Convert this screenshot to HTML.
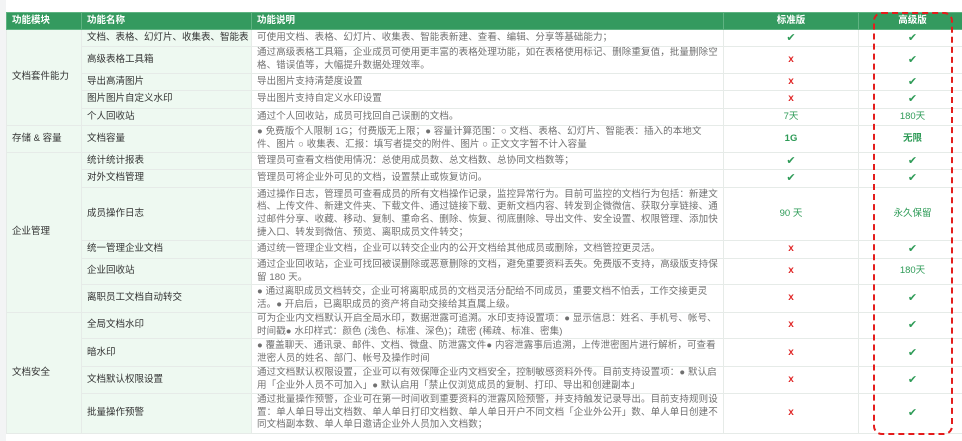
<!DOCTYPE html>
<html><head><meta charset="utf-8">
<style>
html,body{margin:0;padding:0;background:#fff;width:962px;height:441px;overflow:hidden;position:relative}
body{font-family:"Liberation Sans","Noto Sans CJK SC",sans-serif;}
.strip{position:absolute;left:0;top:0;width:6px;height:441px;background:#f3f4f5}
table{position:absolute;left:6px;top:12px;border-collapse:collapse;table-layout:fixed;width:960px;font-size:9.5px;line-height:12.6px}
td,th{border:1px solid #e6ebe8;padding:0 0 0 5px;white-space:nowrap;overflow:hidden;vertical-align:middle;box-sizing:border-box}
th{background:#349a5f;color:#fff;font-weight:bold;text-align:left;height:17px;border-color:#5fb382}
th.c,td.c{text-align:center;padding:0}
td.g{background:#eef9f1;color:#333}
td.n{background:#eef9f1;color:#333}
td.d{color:#707070;letter-spacing:0.1px}
.ok{color:#2e9b57;font-size:11px}
.no{color:#e02828;font-weight:bold;font-size:10px}
.gt{color:#2e9b57}
.gb{color:#2e9b57;font-weight:bold}
.box{position:absolute;left:873px;top:12px;width:76px;height:419px;border:2px dashed #e41c1c;border-radius:9px}
</style></head><body>
<div class="strip"></div>
<table>
<colgroup><col style="width:75px"><col style="width:170px"><col style="width:472px"><col style="width:135px"><col style="width:108px"></colgroup>
<tr><th>功能模块</th><th>功能名称</th><th>功能说明</th><th class="c">标准版</th><th class="c">高级版</th></tr>
<tr style="height:17px"><td class="g" rowspan="5">文档套件能力</td><td class="n">文档、表格、幻灯片、收集表、智能表</td><td class="d">可使用文档、表格、幻灯片、收集表、智能表新建、查看、编辑、分享等基础能力；</td><td class="c ok">✔</td><td class="c ok">✔</td></tr>
<tr style="height:27px"><td class="n">高级表格工具箱</td><td class="d">通过高级表格工具箱，企业成员可使用更丰富的表格处理功能，如在表格使用标记、删除重复值，批量删除空<br>格、错误值等，大幅提升数据处理效率。</td><td class="c no">x</td><td class="c ok">✔</td></tr>
<tr style="height:17px"><td class="n">导出高清图片</td><td class="d">导出图片支持清楚度设置</td><td class="c no">x</td><td class="c ok">✔</td></tr>
<tr style="height:18px"><td class="n">图片图片自定义水印</td><td class="d">导出图片支持自定义水印设置</td><td class="c no">x</td><td class="c ok">✔</td></tr>
<tr style="height:17px"><td class="n">个人回收站</td><td class="d">通过个人回收站，成员可找回自己误删的文档。</td><td class="c gt">7天</td><td class="c gt">180天</td></tr>
<tr style="height:27px"><td class="g">存储 &amp; 容量</td><td class="n">文档容量</td><td class="d">● 免费版个人限制 1G；付费版无上限；● 容量计算范围：○ 文档、表格、幻灯片、智能表：插入的本地文<br>件、图片 ○ 收集表、汇报：填写者提交的附件、图片 ○ 正文文字暂不计入容量</td><td class="c gb">1G</td><td class="c gb">无限</td></tr>
<tr style="height:17px"><td class="g" rowspan="6">企业管理</td><td class="n">统计统计报表</td><td class="d">管理员可查看文档使用情况：总使用成员数、总文档数、总协同文档数等；</td><td class="c ok">✔</td><td class="c ok">✔</td></tr>
<tr style="height:18px"><td class="n">对外文档管理</td><td class="d">管理员可将企业外可见的文档，设置禁止或恢复访问。</td><td class="c ok">✔</td><td class="c ok">✔</td></tr>
<tr style="height:53px"><td class="n">成员操作日志</td><td class="d">通过操作日志，管理员可查看成员的所有文档操作记录，监控异常行为。目前可监控的文档行为包括：新建文<br>档、上传文件、新建文件夹、下载文件、通过链接下载、更新文档内容、转发到企微微信、获取分享链接、通<br>过邮件分享、收藏、移动、复制、重命名、删除、恢复、彻底删除、导出文件、安全设置、权限管理、添加快<br>捷入口、转发到微信、预览、离职成员文件转交；</td><td class="c gt">90 天</td><td class="c gt">永久保留</td></tr>
<tr style="height:18px"><td class="n">统一管理企业文档</td><td class="d">通过统一管理企业文档，企业可以转交企业内的公开文档给其他成员或删除，文档管控更灵活。</td><td class="c no">x</td><td class="c ok">✔</td></tr>
<tr style="height:26px"><td class="n">企业回收站</td><td class="d">通过企业回收站，企业可找回被误删除或恶意删除的文档，避免重要资料丢失。免费版不支持，高级版支持保<br>留 180 天。</td><td class="c no">x</td><td class="c gt">180天</td></tr>
<tr style="height:28px"><td class="n">离职员工文档自动转交</td><td class="d">● 通过离职成员文档转交，企业可将离职成员的文档灵活分配给不同成员，重要文档不怕丢，工作交接更灵<br>活。● 开启后，已离职成员的资产将自动交接给其直属上级。</td><td class="c no">x</td><td class="c ok">✔</td></tr>
<tr style="height:26px"><td class="g" rowspan="4">文档安全</td><td class="n">全局文档水印</td><td class="d">可为企业内文档默认开启全局水印，数据泄露可追溯。水印支持设置项：● 显示信息：姓名、手机号、帐号、<br>时间戳● 水印样式：颜色 (浅色、标准、深色)；疏密 (稀疏、标准、密集)</td><td class="c no">x</td><td class="c ok">✔</td></tr>
<tr style="height:28px"><td class="n">暗水印</td><td class="d">● 覆盖聊天、通讯录、邮件、文档、微盘、防泄露文件● 内容泄露事后追溯，上传泄密图片进行解析，可查看<br>泄密人员的姓名、部门、帐号及操作时间</td><td class="c no">x</td><td class="c ok">✔</td></tr>
<tr style="height:26px"><td class="n">文档默认权限设置</td><td class="d">通过文档默认权限设置，企业可以有效保障企业内文档安全，控制敏感资料外传。目前支持设置项：● 默认启<br>用「企业外人员不可加入」● 默认启用「禁止仅浏览成员的复制、打印、导出和创建副本」</td><td class="c no">x</td><td class="c ok">✔</td></tr>
<tr style="height:40px"><td class="n">批量操作预警</td><td class="d">通过批量操作预警，企业可在第一时间收到重要资料的泄露风险预警，并支持触发记录导出。目前支持规则设<br>置：单人单日导出文档数、单人单日打印文档数、单人单日开户不同文档「企业外公开」数、单人单日创建不<br>同文档副本数、单人单日邀请企业外人员加入文档数；</td><td class="c no">x</td><td class="c ok">✔</td></tr>
</table>
<div class="box"></div>
</body></html>
